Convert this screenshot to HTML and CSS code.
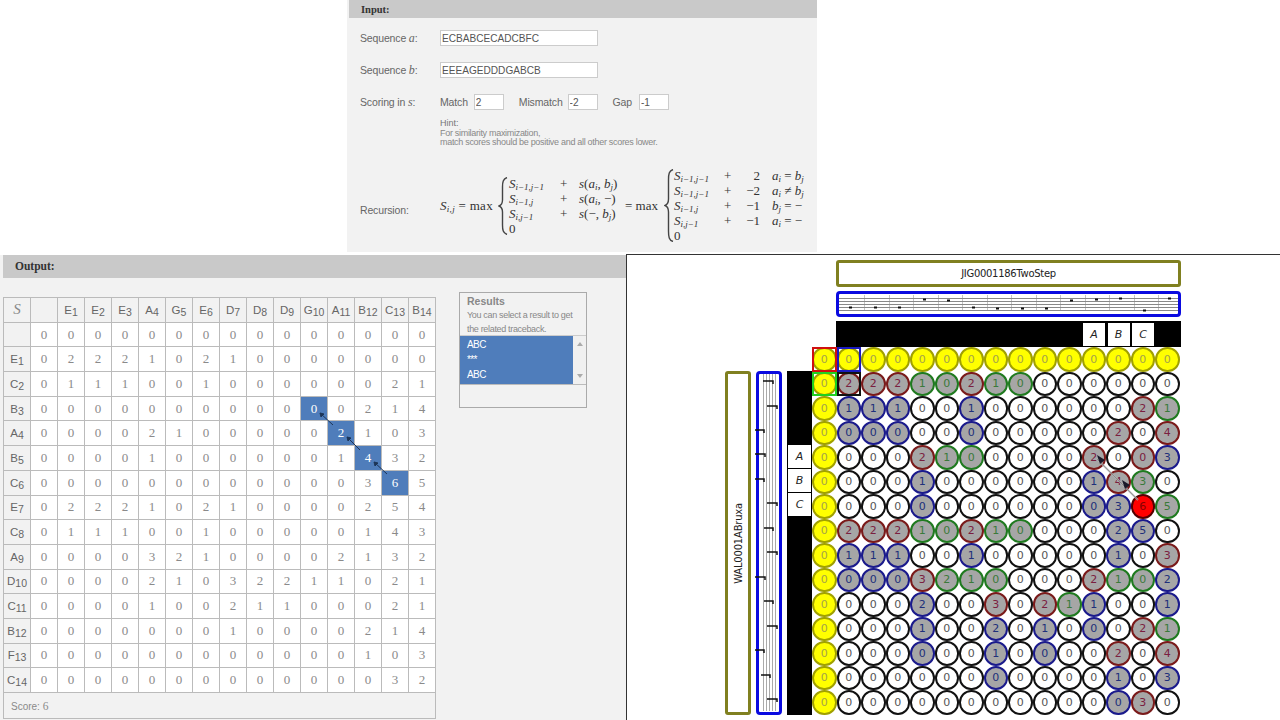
FILE: index.html
```html
<!DOCTYPE html>
<html lang="en">
<head>
  <meta charset="UTF-8">
  <title>Smith-Waterman</title>
  <link rel="stylesheet" href="styles.css">
</head>
<body>
  <!-- Input -->
  <section class="input-panel">
    <h2 class="panel-head">Input:</h2>
    <div class="form-row seq-a">
      <label>Sequence <i class="var">a</i>:</label>
      <input class="seq" type="text" value="ECBABCECADCBFC">
    </div>
    <div class="form-row seq-b">
      <label>Sequence <i class="var">b</i>:</label>
      <input class="seq" type="text" value="EEEAGEDDDGABCB">
    </div>
    <div class="form-row scoring">
      <label>Scoring in <i class="var">s</i>:</label>
      <span class="score-label">Match</span><input class="num num-match" type="text" value="2">
      <span class="score-label mismatch">Mismatch</span><input class="num num-mismatch" type="text" value="-2">
      <span class="score-label gap">Gap</span><input class="num num-gap" type="text" value="-1">
    </div>
    <div class="hint">
      <div class="hint-title">Hint:</div>
      <div>For similarity maximization,</div>
      <div>match scores should be positive and all other scores lower.</div>
    </div>
    <div class="form-row recursion">
      <label>Recursion:</label>
      <div class="math">
        <span class="math-lhs"><i>S<sub>i,j</sub></i> = max</span>
        <svg class="brace brace-1" viewBox="0 0 10 58"><path d="M9 .5C5 2 4.500 5 4.500 10V23C4.500 26 3.500 28 1 29C3.500 30 4.500 32 4.500 35V48C4.500 53 5 56 9 57.500" fill="none" stroke="#444" stroke-width="1.400"/></svg>
        <div class="cases cases-1">
          <div><i>S<sub>i−1,j−1</sub></i></div><div>+</div><div><i>s</i>(<i>a<sub>i</sub></i>, <i>b<sub>j</sub></i>)</div>
          <div><i>S<sub>i−1,j</sub></i></div><div>+</div><div><i>s</i>(<i>a<sub>i</sub></i>, −)</div>
          <div><i>S<sub>i,j−1</sub></i></div><div>+</div><div><i>s</i>(−, <i>b<sub>j</sub></i>)</div>
          <div>0</div>
        </div>
        <span class="math-eq">= max</span>
        <svg class="brace brace-2" viewBox="0 0 10 73"><path d="M9 .5C5 2 4.500 5 4.500 11V30C4.500 33 3.500 35.500 1 36.500C3.500 37.500 4.500 40 4.500 43V62C4.500 68 5 71 9 72.500" fill="none" stroke="#444" stroke-width="1.400"/></svg>
        <div class="cases cases-2">
          <div><i>S<sub>i−1,j−1</sub></i></div><div>+</div><div class="val">2</div><div><i>a<sub>i</sub></i> = <i>b<sub>j</sub></i></div>
          <div><i>S<sub>i−1,j−1</sub></i></div><div>+</div><div class="val">−2</div><div><i>a<sub>i</sub></i> ≠ <i>b<sub>j</sub></i></div>
          <div><i>S<sub>i−1,j</sub></i></div><div>+</div><div class="val">−1</div><div><i>b<sub>j</sub></i> = −</div>
          <div><i>S<sub>i,j−1</sub></i></div><div>+</div><div class="val">−1</div><div><i>a<sub>i</sub></i> = −</div>
          <div>0</div>
        </div>
      </div>
    </div>
  </section>

  <div class="bottom">
    <!-- Output -->
    <section class="output-panel">
      <h2 class="panel-head">Output:</h2>
      <div class="output-body">
        <div class="table-wrap">
          <table class="matrix">
            <thead>
              <tr><th class="s-head">S</th><th></th><th>E<sub>1</sub></th><th>E<sub>2</sub></th><th>E<sub>3</sub></th><th>A<sub>4</sub></th><th>G<sub>5</sub></th><th>E<sub>6</sub></th><th>D<sub>7</sub></th><th>D<sub>8</sub></th><th>D<sub>9</sub></th><th>G<sub>10</sub></th><th>A<sub>11</sub></th><th>B<sub>12</sub></th><th>C<sub>13</sub></th><th>B<sub>14</sub></th></tr>
            </thead>
            <tbody>
              <tr><th></th><td>0</td><td>0</td><td>0</td><td>0</td><td>0</td><td>0</td><td>0</td><td>0</td><td>0</td><td>0</td><td>0</td><td>0</td><td>0</td><td>0</td><td>0</td></tr>
              <tr><th>E<sub>1</sub></th><td>0</td><td>2</td><td>2</td><td>2</td><td>1</td><td>0</td><td>2</td><td>1</td><td>0</td><td>0</td><td>0</td><td>0</td><td>0</td><td>0</td><td>0</td></tr>
              <tr><th>C<sub>2</sub></th><td>0</td><td>1</td><td>1</td><td>1</td><td>0</td><td>0</td><td>1</td><td>0</td><td>0</td><td>0</td><td>0</td><td>0</td><td>0</td><td>2</td><td>1</td></tr>
              <tr><th>B<sub>3</sub></th><td>0</td><td>0</td><td>0</td><td>0</td><td>0</td><td>0</td><td>0</td><td>0</td><td>0</td><td>0</td><td class="hit">0</td><td>0</td><td>2</td><td>1</td><td>4</td></tr>
              <tr><th>A<sub>4</sub></th><td>0</td><td>0</td><td>0</td><td>0</td><td>2</td><td>1</td><td>0</td><td>0</td><td>0</td><td>0</td><td>0</td><td class="hit">2</td><td>1</td><td>0</td><td>3</td></tr>
              <tr><th>B<sub>5</sub></th><td>0</td><td>0</td><td>0</td><td>0</td><td>1</td><td>0</td><td>0</td><td>0</td><td>0</td><td>0</td><td>0</td><td>1</td><td class="hit">4</td><td>3</td><td>2</td></tr>
              <tr><th>C<sub>6</sub></th><td>0</td><td>0</td><td>0</td><td>0</td><td>0</td><td>0</td><td>0</td><td>0</td><td>0</td><td>0</td><td>0</td><td>0</td><td>3</td><td class="hit">6</td><td>5</td></tr>
              <tr><th>E<sub>7</sub></th><td>0</td><td>2</td><td>2</td><td>2</td><td>1</td><td>0</td><td>2</td><td>1</td><td>0</td><td>0</td><td>0</td><td>0</td><td>2</td><td>5</td><td>4</td></tr>
              <tr><th>C<sub>8</sub></th><td>0</td><td>1</td><td>1</td><td>1</td><td>0</td><td>0</td><td>1</td><td>0</td><td>0</td><td>0</td><td>0</td><td>0</td><td>1</td><td>4</td><td>3</td></tr>
              <tr><th>A<sub>9</sub></th><td>0</td><td>0</td><td>0</td><td>0</td><td>3</td><td>2</td><td>1</td><td>0</td><td>0</td><td>0</td><td>0</td><td>2</td><td>1</td><td>3</td><td>2</td></tr>
              <tr><th>D<sub>10</sub></th><td>0</td><td>0</td><td>0</td><td>0</td><td>2</td><td>1</td><td>0</td><td>3</td><td>2</td><td>2</td><td>1</td><td>1</td><td>0</td><td>2</td><td>1</td></tr>
              <tr><th>C<sub>11</sub></th><td>0</td><td>0</td><td>0</td><td>0</td><td>1</td><td>0</td><td>0</td><td>2</td><td>1</td><td>1</td><td>0</td><td>0</td><td>0</td><td>2</td><td>1</td></tr>
              <tr><th>B<sub>12</sub></th><td>0</td><td>0</td><td>0</td><td>0</td><td>0</td><td>0</td><td>0</td><td>1</td><td>0</td><td>0</td><td>0</td><td>0</td><td>2</td><td>1</td><td>4</td></tr>
              <tr><th>F<sub>13</sub></th><td>0</td><td>0</td><td>0</td><td>0</td><td>0</td><td>0</td><td>0</td><td>0</td><td>0</td><td>0</td><td>0</td><td>0</td><td>1</td><td>0</td><td>3</td></tr>
              <tr><th>C<sub>14</sub></th><td>0</td><td>0</td><td>0</td><td>0</td><td>0</td><td>0</td><td>0</td><td>0</td><td>0</td><td>0</td><td>0</td><td>0</td><td>0</td><td>3</td><td>2</td></tr>
            </tbody>
            <tfoot>
              <tr><td colspan="16" class="score">Score: <span>6</span></td></tr>
            </tfoot>
          </table>
          <!-- traceback arrows -->
          <svg class="trace" width="432" height="421" viewBox="0 0 432 421">
            <g stroke="#1d3557" stroke-width="1" fill="#1d3557">
              <path d="M317 116L330 128"/><path d="M317 116L321 117L318 120Z"/>
              <path d="M344 140L357 153"/><path d="M344 140L348 141L345 144Z"/>
              <path d="M371 165L384 177"/><path d="M371 165L375 166L372 169Z"/>
            </g>
          </svg>
        </div>
        <aside class="results">
          <div class="results-head">
            <strong>Results</strong>
            <p>You can select a result to get the related traceback.</p>
          </div>
          <div class="results-list">
            <div class="result-item"><div>ABC</div><div>***</div><div>ABC</div></div>
            <div class="scrollbar"><span class="arrow-up"></span><span class="arrow-down"></span></div>
          </div>
        </aside>
      </div>
    </section>

    <!-- Diagram -->
    <section class="diagram">
      <div class="dgm-grid">
        <div class="title-top">JIG0001186TwoStep</div>
        <div class="score-top">
          <svg width="339" height="20" viewBox="0 0 339 20">
            <g stroke="#888" stroke-width="1">
              <path d="M0 4.500H339M0 7.500H339M0 10.500H339M0 13.500H339M0 16.500H339"/>
              <path d="M25.500 1V17M50.500 1V17M74.500 1V17M99.500 1V17M123.500 1V17M148.500 1V17M172.500 1V17M197.500 1V17M221.500 1V17M246.500 1V17M270.500 1V17M295.500 1V17M319.500 1V17" opacity=".5"/>
            </g>
            <g stroke="#111" stroke-width="2">
              <path d="M10 13.500h3M35 13.500h3M59 13.500h3M84 5.500h3M108 6.500h3M133 13.500h3M157 14.500h3M182 14.500h3M206 14.500h3M231 6.500h3M256 5.500h3M280 4.500h3M304 16.500h3M329 4.500h3"/>
            </g>
          </svg>
        </div>
        <div class="bar-top">
          <span class="tag">A</span><span class="tag">B</span><span class="tag">C</span>
        </div>
        <div class="title-left"><span>WAL0001ABruxa</span></div>
        <div class="score-left">
          <svg width="20" height="337" viewBox="0 0 20 337">
            <g stroke="#aaa" stroke-width="1">
              <path d="M4.500 0V337M7.500 0V337M10.500 0V337M13.500 0V337M16.500 0V337"/>
            </g>
            <g stroke="#111" stroke-width="1.500" fill="none">
              <path d="M4 7h10v3M8 32h10v3M-4 56h9v3M-4 80h10v3M-4 105h9v3M8 129h10v3M5 154h9v3M8 178h10v3M-4 203h10v3M5 227h9v3M8 252h10v3M-4 276h9v3M2 301h9v3M8 325h10v3"/>
            </g>
          </svg>
        </div>
        <div class="bar-left">
          <span class="tag">A</span><span class="tag">B</span><span class="tag">C</span>
        </div>
        <div class="cells">
          <span class="y sq-red">0</span><span class="y sq-blue">0</span><span class="y">0</span><span class="y">0</span><span class="y">0</span><span class="y">0</span><span class="y">0</span><span class="y">0</span><span class="y">0</span><span class="y">0</span><span class="y">0</span><span class="y">0</span><span class="y">0</span><span class="y">0</span><span class="y">0</span>
          <span class="y sq-green">0</span><span class="r sq-black">2</span><span class="r">2</span><span class="r">2</span><span class="g">1</span><span class="g">0</span><span class="r">2</span><span class="g">1</span><span class="g">0</span><span>0</span><span>0</span><span>0</span><span>0</span><span>0</span><span>0</span>
          <span class="y">0</span><span class="b">1</span><span class="b">1</span><span class="b">1</span><span>0</span><span>0</span><span class="b">1</span><span>0</span><span>0</span><span>0</span><span>0</span><span>0</span><span>0</span><span class="r">2</span><span class="g">1</span>
          <span class="y">0</span><span class="b">0</span><span class="b">0</span><span class="b">0</span><span>0</span><span>0</span><span class="b">0</span><span>0</span><span>0</span><span>0</span><span>0</span><span>0</span><span class="r">2</span><span>0</span><span class="r">4</span>
          <span class="y">0</span><span>0</span><span>0</span><span>0</span><span class="r">2</span><span class="g">1</span><span class="g">0</span><span>0</span><span>0</span><span>0</span><span>0</span><span class="r">2</span><span>0</span><span class="r">0</span><span class="b">3</span>
          <span class="y">0</span><span>0</span><span>0</span><span>0</span><span class="b">1</span><span>0</span><span>0</span><span>0</span><span>0</span><span>0</span><span>0</span><span class="b">1</span><span class="r">4</span><span class="g">3</span><span>0</span>
          <span class="y">0</span><span>0</span><span>0</span><span>0</span><span class="b">0</span><span>0</span><span>0</span><span>0</span><span>0</span><span>0</span><span>0</span><span class="b">0</span><span class="b">3</span><span class="hot">6</span><span class="g">5</span>
          <span class="y">0</span><span class="r">2</span><span class="r">2</span><span class="r">2</span><span class="g">1</span><span class="g">0</span><span class="r">2</span><span class="g">1</span><span class="g">0</span><span>0</span><span>0</span><span>0</span><span class="b">2</span><span class="b">5</span><span>0</span>
          <span class="y">0</span><span class="b">1</span><span class="b">1</span><span class="b">1</span><span>0</span><span>0</span><span class="b">1</span><span>0</span><span>0</span><span>0</span><span>0</span><span>0</span><span class="b">1</span><span>0</span><span class="r">3</span>
          <span class="y">0</span><span class="b">0</span><span class="b">0</span><span class="b">0</span><span class="r">3</span><span class="g">2</span><span class="g">1</span><span class="g">0</span><span>0</span><span>0</span><span>0</span><span class="r">2</span><span class="g">1</span><span class="g">0</span><span class="b">2</span>
          <span class="y">0</span><span>0</span><span>0</span><span>0</span><span class="b">2</span><span>0</span><span>0</span><span class="r">3</span><span>0</span><span class="r">2</span><span class="g">1</span><span class="b">1</span><span>0</span><span>0</span><span class="b">1</span>
          <span class="y">0</span><span>0</span><span>0</span><span>0</span><span class="b">1</span><span>0</span><span>0</span><span class="b">2</span><span>0</span><span class="b">1</span><span>0</span><span class="b">0</span><span>0</span><span class="r">2</span><span class="g">1</span>
          <span class="y">0</span><span>0</span><span>0</span><span>0</span><span class="b">0</span><span>0</span><span>0</span><span class="b">1</span><span>0</span><span class="b">0</span><span>0</span><span>0</span><span class="r">2</span><span>0</span><span class="r">4</span>
          <span class="y">0</span><span>0</span><span>0</span><span>0</span><span>0</span><span>0</span><span>0</span><span class="b">0</span><span>0</span><span>0</span><span>0</span><span>0</span><span class="b">1</span><span>0</span><span class="b">3</span>
          <span class="y">0</span><span>0</span><span>0</span><span>0</span><span>0</span><span>0</span><span>0</span><span>0</span><span>0</span><span>0</span><span>0</span><span>0</span><span class="b">0</span><span class="r">3</span><span>0</span>
          <!-- traceback over the cells -->
          <svg class="cell-trace" width="368" height="368" viewBox="0 0 368 368">
            <path d="M285 112L326 153" stroke="#b5b5b5" stroke-width="2" opacity=".8"/>
            <path d="M285 112L326 153" stroke="#333" stroke-width="1" opacity=".3"/>
            <path d="M285 108L293 113L288 117Z M310 133L318 138L313 142Z" fill="#1a1a2a"/>
          </svg>
        </div>
      </div>
    </section>
  </div>
</body>
</html>
```

FILE: styles.css
```css
* {
  box-sizing: border-box;
}

html, body {
  margin: 0;
  height: 720px;
  overflow: hidden;
  background: #fff;
}

body {
  font-family: "Liberation Sans", Arial, sans-serif;
  color: #666;
  font-size: 10.5px;
}

.panel-head {
  margin: 0;
  background: #c9c9c9;
  color: #333;
  font-family: "Liberation Serif", serif;
  font-weight: bold;
}

/* ---- input ---- */

.input-panel {
  margin-left: 347px;
  width: 470px;
  height: 252px;
  background: #f2f2f2;
  opacity: .999;
}

.input-panel .panel-head {
  margin-left: 2px;
  height: 18px;
  line-height: 19px;
  padding-left: 12px;
  font-size: 10.5px;
}

.form-row {
  display: flex;
  align-items: center;
  padding-left: 13px;
  letter-spacing: -.15px;
}

.form-row label {
  width: 80px;
  flex: none;
}

.var {
  font-family: "Liberation Serif", serif;
  font-size: 12px;
}

.seq-a { margin-top: 12px; }
.seq-b { margin-top: 16px; }
.scoring { margin-top: 16px; }

input {
  height: 16px;
  border: 1px solid #ccc;
  background: #fff;
  color: #555;
  font-family: "Liberation Sans", Arial, sans-serif;
  font-size: 10.1px;
  padding: 0 1px;
  outline: none;
}

.seq { width: 158px; }
.num { width: 30px; }

.score-label { flex: none; }
.num-match { margin-left: 6px; }
.mismatch { margin-left: 15px; }
.num-mismatch { margin-left: 5px; }
.gap { margin-left: 15px; }
.num-gap { margin-left: 7px; }

.hint {
  margin: 9px 0 0 93px;
  font-size: 9px;
  line-height: 9.500px;
  letter-spacing: -.3px;
  color: #888;
}

.hint-title {
  color: #777;
  letter-spacing: 0;
}

.recursion {
  margin-top: 20px;
  height: 76px;
}

.recursion label {
  padding-top: 8px;
  flex: none;
}

.math {
  display: flex;
  align-items: center;
  font-family: "Liberation Serif", serif;
  font-size: 13px;
  letter-spacing: 0;
  color: #333;
  height: 76px;
  white-space: nowrap;
}

.math sub {
  font-size: 9px;
  line-height: 0;
  vertical-align: -2px;
}

.math-lhs { width: 58px; flex: none; letter-spacing: .3px; }
.math-eq { width: 39px; flex: none; }
.brace { flex: none; width: 10px; }
.brace-1 { height: 58px; margin-right: 1px; }
.brace-2 { height: 73px; }

.cases {
  display: grid;
  line-height: 15px;
  grid-auto-rows: 15px;
  flex: none;
}

.cases-1 {
  grid-template-columns: 49px 12px 57px;
  column-gap: 1px;
  width: 116px;
}

.cases-1 div:nth-child(3n+2) { padding-left: 1px; }
.cases-1 div:nth-child(3n) { padding-left: 7px; }

.cases-2 {
  grid-template-columns: 48px 12px 26px 36px;
  width: 122px;
}

.cases-2 div:nth-child(4n+2) { padding-left: 2px; }
.cases-2 .val { text-align: right; }
.cases-2 div:nth-child(4n) { padding-left: 12px; }

/* ---- bottom row ---- */

.bottom {
  display: flex;
  margin-top: 3px;
  height: 465px;
}

.output-panel {
  width: 626px;
  flex: none;
  background: #f2f2f2;
  padding-left: 3px;
  opacity: .999;
}

.output-panel .panel-head {
  height: 23px;
  line-height: 23px;
  padding-left: 12px;
  font-size: 11.5px;
}

.output-body {
  display: flex;
  align-items: flex-start;
  padding-top: 14px;
}

.table-wrap {
  position: relative;
  flex: none;
  margin-top: 5px;
}

.matrix {
  border-collapse: collapse;
  table-layout: fixed;
  width: 432px;
  background: #fff;
  font-family: "Liberation Serif", serif;
  font-size: 13px;
  color: #8a8a8a;
}

.matrix tr {
  height: 24.700px;
}

.matrix th, .matrix td {
  border: 1px solid #bbb;
  width: 27px;
  padding: 0;
  text-align: center;
}

.matrix th {
  background: #f2f2f2;
  font-family: "Liberation Sans", Arial, sans-serif;
  font-weight: normal;
  font-size: 11.5px;
  color: #666;
}

.matrix sub {
  font-size: 10.5px;
  line-height: 0;
  vertical-align: -2px;
}

.matrix .s-head {
  font-family: "Liberation Serif", serif;
  font-style: italic;
  font-size: 15px;
  color: #888;
}

.matrix .hit {
  background: #4f7dbb;
  color: #fff;
}

.matrix .score {
  background: #f2f2f2;
  width: auto;
  height: 26px;
  padding-left: 7px;
  text-align: left;
  font-family: "Liberation Sans", Arial, sans-serif;
  font-size: 10px;
}

.matrix .score span {
  font-family: "Liberation Serif", serif;
  font-size: 11.500px;
}

.trace {
  position: absolute;
  left: 0;
  top: 0;
  pointer-events: none;
}

.results {
  margin-left: 23px;
  width: 128px;
  height: 116px;
  border: 1px solid #aaa;
  background: #f2f2f2;
}

.results-head {
  height: 43px;
  padding: 2px 0 0 7px;
  border-bottom: 1px solid #ccc;
  color: #888;
}

.results-head strong {
  display: block;
  font-size: 10.500px;
  line-height: 13px;
}

.results-head p {
  margin: 0;
  font-size: 9px;
  line-height: 14px;
  letter-spacing: -.33px;
}

.results-list {
  display: flex;
  height: 49px;
  border-bottom: 1px solid #bbb;
}

.result-item {
  flex: 1;
  background: #4f7dbb;
  color: #fff;
  padding: 1px 0 0 7px;
  font-size: 10px;
  letter-spacing: -.6px;
  line-height: 15px;
}

.scrollbar {
  width: 13px;
  background: #f0f0f0;
  display: flex;
  flex-direction: column;
  justify-content: space-between;
  align-items: center;
  padding: 6px 0;
}

.arrow-up, .arrow-down {
  width: 0;
  height: 0;
  border-left: 3px solid transparent;
  border-right: 3px solid transparent;
}

.arrow-up { border-bottom: 4px solid #aaa; }
.arrow-down { border-top: 4px solid #aaa; }

/* ---- diagram ---- */

.diagram {
  flex: 1;
  background: #fff;
  margin-top: -1px;
  border-top: 1px solid #333;
  border-left: 1px solid #333;
  padding: 5px 0 0 98px;
  opacity: .999;
}

.dgm-grid {
  display: grid;
  grid-template-columns: 26px 5px 26px 5px 25px 368px;
  grid-template-rows: 27px 4px 26px 4px 26px 24px 344px;
  font-family: "DejaVu Sans", sans-serif;
  color: #222;
}

.title-top, .score-top, .bar-top {
  grid-column: 6;
  width: 345px;
  margin-left: 24px;
}

.title-top {
  grid-row: 1;
  border: 3px solid #808020;
  border-radius: 3px;
  display: flex;
  align-items: center;
  justify-content: center;
  font-size: 10px;
  letter-spacing: -.3px;
}

.score-top {
  grid-row: 3;
  border: 3px solid #0a0ae0;
  border-radius: 4px;
  overflow: hidden;
}

.score-top svg, .score-left svg {
  display: block;
}

.bar-top {
  grid-row: 5;
  background: #000;
  display: flex;
  justify-content: flex-end;
  gap: 2.500px;
  padding: 2px 27px 1px 0;
}

.tag {
  width: 22px;
  background: #fff;
  display: flex;
  align-items: center;
  justify-content: center;
  font-size: 11px;
  font-style: italic;
}

.title-left, .score-left, .bar-left {
  grid-row: 7;
}

.title-left {
  grid-column: 1;
  border: 3px solid #808020;
  border-radius: 3px;
  display: flex;
  align-items: center;
  justify-content: center;
  font-size: 10px;
  letter-spacing: -.2px;
}

.title-left span {
  writing-mode: vertical-rl;
  transform: rotate(180deg);
}

.score-left {
  grid-column: 3;
  border: 3px solid #0a0ae0;
  border-radius: 4px;
}

.score-left svg {
  overflow: visible;
}

.bar-left {
  grid-column: 5;
  background: #000;
  display: flex;
  flex-direction: column;
  padding: 74px 1px 0;
}

.bar-left .tag {
  width: 23px;
  height: 23px;
  margin-bottom: 1px;
}

.cells {
  grid-column: 6;
  grid-row: 6 / 8;
  position: relative;
  display: grid;
  grid-template-columns: repeat(15, 24.500px);
  grid-auto-rows: 24.500px;
  align-self: start;
  height: 368px;
}

.cells span {
  position: relative;
  display: flex;
  align-items: center;
  justify-content: center;
  border: 2px solid #111;
  border-radius: 50%;
  background: #fff;
  color: #555;
  font-size: 11px;
}

.cells .y { background: #ffff00; border: 2.500px solid #a0a000; color: #a3a34a; }
.cells .r { background: #a6a6a6; border-color: #7a1a1a; color: #7a2040; }
.cells .b { background: #a6a6a6; border-color: #1a1a8c; color: #20307a; }
.cells .g { background: #a6a6a6; border-color: #1f7a1f; color: #3a7a3a; }
.cells .hot { background: #ff0000; border-color: #500; color: #800; }

.sq-red::before, .sq-blue::before, .sq-green::before, .sq-black::before {
  content: "";
  position: absolute;
  inset: -2px;
  border: 2px solid;
}

.sq-red::before { border-color: #d01010; }
.sq-blue::before { border-color: #1a1ac0; }
.sq-green::before { border-color: #20d020; }
.sq-black::before { border-color: #111; }

.cell-trace {
  position: absolute;
  left: 0;
  top: 0;
  pointer-events: none;
}
```
